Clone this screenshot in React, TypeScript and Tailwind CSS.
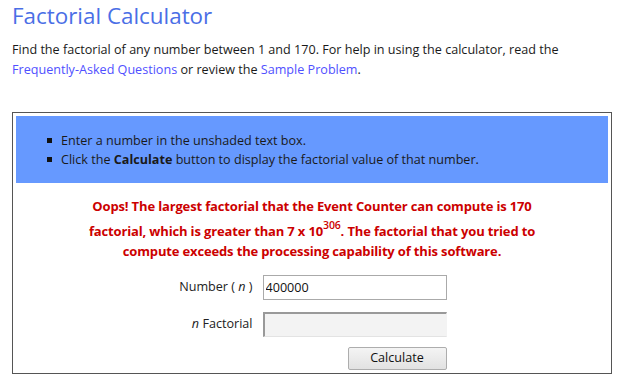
import { useState } from "react";

function Bullet({ children }: { children: React.ReactNode }) {
  return (
    <li className="flex items-center">
      <span className="w-[5px] h-[5px] bg-[#111] mr-[9px] ml-[31px]" />
      <span>{children}</span>
    </li>
  );
}

export default function App() {
  const [num, setNum] = useState("400000");

  return (
    <div className="w-[629px] h-[381px] bg-white px-3 text-[12.6px] text-[#1a1a1a] font-['Segoe_UI','Open_Sans',sans-serif] overflow-hidden">
      <h1 className="text-[22.4px] leading-[32px] text-[#4a6ee6]">
        Factorial Calculator
      </h1>
      <p className="mt-[8px] leading-[20px] w-[599px]">
        Find the factorial of any number between 1 and 170. For help in using the calculator, read the{" "}
        <a href="#" className="text-[#5050ff]">Frequently-Asked Questions</a> or review the{" "}
        <a href="#" className="text-[#5050ff]">Sample Problem</a>.
      </p>

      <section className="mt-[32px] w-[600px] border border-[#555] p-[3px] pb-[3px]">
        <div className="bg-[#6699ff] pt-[15px] pb-[14px]">
          <ul className="leading-[19px]">
            <Bullet>Enter a number in the unshaded text box.</Bullet>
            <Bullet>
              Click the <b>Calculate</b> button to display the factorial value of that number.
            </Bullet>
          </ul>
        </div>

        <div className="mt-[13px] text-center font-bold text-[13px] tracking-[-0.15px] text-[#cc0000] leading-[20px]">
          <div>Oops! The largest factorial that the Event Counter can compute is 170</div>
          <div className="mt-[5px]">
            factorial, which is greater than 7 x 10<sup className="text-[10.5px] font-semibold top-[-7px]">306</sup>. The factorial that you tried to
          </div>
          <div>compute exceeds the processing capability of this software.</div>
        </div>

        <div className="mt-[14px] mx-auto w-[269px] grid grid-cols-[75px_184px] gap-x-[10px] items-center">
          <label className="text-right whitespace-nowrap text-[#222]">
            Number ( <i>n</i> )
          </label>
          <input
            value={num}
            onChange={(e) => setNum(e.target.value)}
            className="h-[25px] border border-[#aaa] px-[2px] text-[12.6px] text-[#111] outline-none bg-white"
          />
          <label className="mt-[12px] text-right whitespace-nowrap text-[#222]">
            <i>n</i> Factorial
          </label>
          <input
            readOnly
            className="mt-[12px] h-[25px] border-t-2 border-l-2 border-r border-b border-t-[#999] border-l-[#999] border-r-[#f3f3f3] border-b-[#e3e3e3] bg-[#f3f3f3] outline-none"
          />
          <div />
          <div className="mt-[10px] flex justify-end">
            <button className="w-[99px] h-[23px] border border-[#adadad] rounded-[2px] bg-gradient-to-b from-[#f4f4f4] to-[#e2e2e2] text-[12.6px] text-[#111] leading-none">
              Calculate
            </button>
          </div>
        </div>
      </section>
    </div>
  );
}
